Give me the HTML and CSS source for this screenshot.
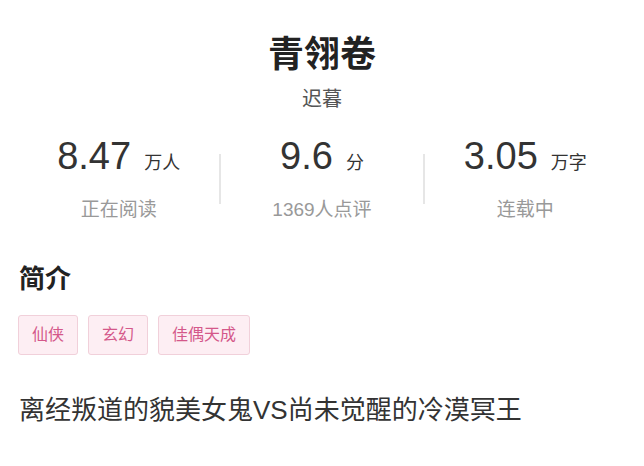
FILE: index.html
```html
<!DOCTYPE html>
<html lang="zh-CN">
<head>
  <meta charset="UTF-8">
  <title>青翎卷 – 迟暮</title>
  <link rel="stylesheet" href="styles.css">
</head>
<body>
  <div class="book-head">
    <h1>青翎卷</h1>
    <div class="author">迟暮</div>
  </div>

  <!-- reading stats -->
  <div class="stats">
    <div class="stat">
      <div class="num">8.47<span class="unit">万人</span></div>
      <div class="label">正在阅读</div>
    </div>
    <div class="divider"></div>
    <div class="stat">
      <div class="num">9.6<span class="unit">分</span></div>
      <div class="label">1369人点评</div>
    </div>
    <div class="divider"></div>
    <div class="stat">
      <div class="num">3.05<span class="unit">万字</span></div>
      <div class="label">连载中</div>
    </div>
  </div>

  <div class="intro">
    <h2>简介</h2>
    <div class="tags">
      <span class="tag">仙侠</span>
      <span class="tag">玄幻</span>
      <span class="tag">佳偶天成</span>
    </div>
    <p class="desc">离经叛道的貌美女鬼VS尚未觉醒的冷漠冥王</p>
  </div>
</body>
</html>
```

FILE: styles.css
```css
body {
  margin: 0;
  background-color: #fff;
  font-family: "Liberation Sans", "Noto Sans CJK SC", sans-serif;
  color: #333;
}
.book-head {
  padding-top: 33px;
  text-align: center;
}
h1 {
  margin: 0;
  font-size: 36px;
  line-height: 44px;
  font-weight: bold;
  color: #222;
}
.author {
  margin-top: 8px;
  font-size: 20px;
  line-height: 28px;
  color: #555;
}
.stats {
  display: flex;
  align-items: center;
  padding: 0 18px;
  margin-top: 21px;
}
.stat {
  flex: 1;
  text-align: center;
}
.num {
  font-size: 38px;
  line-height: 44px;
  color: #333;
}
.unit {
  font-size: 18px;
  margin-left: 13px;
}
.label {
  margin-top: 12px;
  font-size: 19px;
  line-height: 26px;
  color: #999;
}
.divider {
  width: 2px;
  height: 50px;
  background-color: #e6e6e6;
}
.intro {
  padding: 0 19px 0 18px;
  margin-top: 38px;
}
h2 {
  margin: 0 0 0 1px;
  font-size: 26px;
  line-height: 36px;
  font-weight: bold;
  color: #222;
}
.tags {
  display: flex;
  gap: 10px;
  margin-top: 18px;
}
.tag {
  height: 40px;
  line-height: 38px;
  box-sizing: border-box;
  padding: 0 13px;
  font-size: 16px;
  color: #d4588a;
  background-color: #fdeef3;
  border: 1px solid #f1d0da;
  border-radius: 3px;
}
.desc {
  margin: 38px 0 0 1px;
  font-size: 26px;
  line-height: 34px;
  color: #333;
}
```
